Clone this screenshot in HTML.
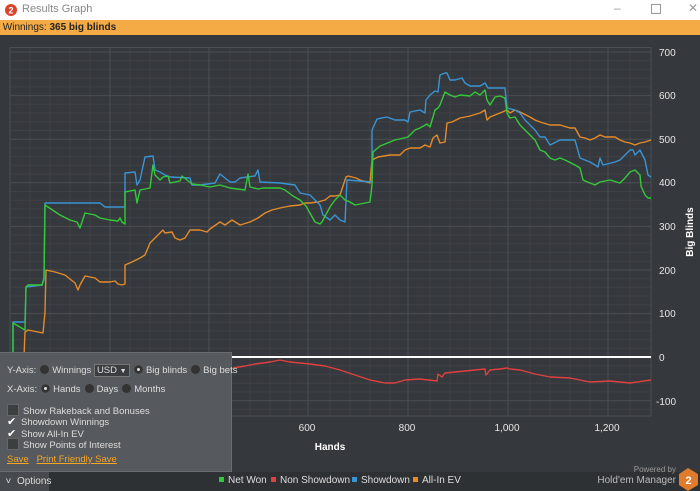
<!DOCTYPE html>
<html><head><meta charset="utf-8"><style>
body{margin:0;width:700px;height:491px;overflow:hidden;background:#35383c;font-family:"Liberation Sans",sans-serif;position:relative}
.title{position:absolute;left:0;top:0;width:700px;height:20px;background:#fff}
.bar{position:absolute;left:0;top:20px;width:700px;height:15px;background:#f4ab45;font-size:10px;line-height:15px;color:#222}
.panel{position:absolute;left:0;top:352px;width:231px;height:118px;background:#56595d;border:1px solid #6a6d70;border-left:none;color:#ddd;font-size:9.5px}
.panel div{position:absolute;white-space:nowrap}
.rad{display:inline-block;width:9px;height:9px;border-radius:50%;background:#333;vertical-align:-1px;margin:0 3px 0 4px}
.rad.on{background:#333;box-shadow:inset 0 0 0 3px #333,inset 0 0 0 5px #ddd}
.cb{display:inline-block;width:10px;height:10px;background:#3c3f42;border:1px solid #666;vertical-align:-2px;margin-right:4px}
.ck{display:inline-block;width:12px;color:#fff;font-size:11px;margin-right:2px}
.lnk{color:#f5a623;text-decoration:underline}
.bot{position:absolute;left:0;top:472px;width:700px;height:19px;background:#2e3134}
</style></head><body>
<div class="title">
 <svg style="position:absolute;left:5px;top:4px" width="12" height="12"><circle cx="6" cy="6" r="6" fill="#d9432b"/><text x="6" y="9.5" font-size="9" font-weight="bold" fill="#fff" text-anchor="middle" font-family="Liberation Sans">2</text></svg>
 <span style="position:absolute;left:22px;top:3px;font-size:11px;color:#888">Results Graph</span>
 <span style="position:absolute;left:614px;top:1px;font-size:12px;color:#999">–</span>
 <span style="position:absolute;left:651px;top:4px;width:8px;height:8px;border:1px solid #999"></span>
 <span style="position:absolute;left:688px;top:1px;font-size:12px;color:#999">✕</span>
</div>
<div class="bar">&nbsp;Winnings: <b>365 big blinds</b></div>
<svg style="position:absolute;left:0;top:35px" width="700" height="437" viewBox="0 35 700 437">
<g stroke="#3e4145" stroke-width="1">
<path d="M30 47V416M50 47V416M70 47V416M90 47V416M130 47V416M150 47V416M170 47V416M190 47V416M230 47V416M250 47V416M270 47V416M290 47V416M330 47V416M350 47V416M370 47V416M390 47V416M430 47V416M450 47V416M470 47V416M490 47V416M530 47V416M550 47V416M570 47V416M590 47V416M630 47V416"/>
<path d="M10 60.7H651M10 69.4H651M10 78.2H651M10 86.9H651M10 104.3H651M10 113H651M10 121.7H651M10 130.5H651M10 147.9H651M10 156.6H651M10 165.3H651M10 174H651M10 191.5H651M10 200.2H651M10 208.9H651M10 217.6H651M10 235H651M10 243.8H651M10 252.5H651M10 261.2H651M10 278.6H651M10 287.3H651M10 296H651M10 304.8H651M10 322.2H651M10 330.9H651M10 339.6H651M10 348.3H651M10 365.7H651M10 374.4H651M10 383.2H651M10 391.9H651M10 409.3H651"/>
</g>
<g stroke="#4b4e52" stroke-width="1">
<path d="M10 47V416M110 47V416M209 47V416M308 47V416M408 47V416M508 47V416M608 47V416M651 47V416"/>
<path d="M10 47.5H651M10 52H651M10 95.6H651M10 139.2H651M10 182.8H651M10 226.4H651M10 270H651M10 313.6H651M10 400.8H651M10 416H651"/>
</g>
<path d="M10 357H651" stroke="#fff" stroke-width="2"/>
<g fill="none" stroke-width="1.4" stroke-linejoin="round">
<polyline stroke="#e0413f" points="233,368 245,366 255,364 270,362 280,360 290,362 300,363 310,364 325,366 340,370 355,375 370,380 385,383 395,383 405,380 420,379 437,381 438,374 442,377 445,373 455,372 465,371 485,369 486,375 490,370 500,369 507,368 510,369 520,370 535,374 550,377 570,378 590,382 610,381 630,383 651,380"/>
<polyline stroke="#e48b2a" points="24,357 25,332 28,330 43,333 45,312 46,270 55,272 65,275 75,283 78,290 80,285 85,276 95,278 100,282 110,282 115,281 118,284 122,285 125,284 125,265 132,262 140,258 145,255 150,243 155,238 160,233 163,230 165,233 172,232 175,238 180,240 185,238 190,230 200,230 207,232 210,229 220,222 225,225 232,220 240,225 250,222 258,218 265,213 272,210 280,208 290,206 300,205 305,203 310,203 318,202 325,200 330,196 335,196 340,195 346,177 348,176 356,178 360,180 370,183 372,160 378,157 390,155 400,155 405,150 410,148 420,148 425,145 430,147 433,138 437,135 440,143 445,142 447,123 452,122 460,118 470,116 480,113 485,110 487,120 490,117 500,113 507,110 510,113 515,110 520,112 530,117 535,120 540,122 550,125 560,125 570,128 575,128 580,137 585,138 590,140 595,138 600,135 605,137 615,137 620,140 625,142 630,143 635,145 640,143 645,142 651,140"/>
<polyline stroke="#3a94d4" points="13,357 13,322 25,322 26,287 42,285 44,280 45,203 100,203 105,207 125,207 125,173 135,172 137,185 140,180 145,157 153,156 155,170 160,172 165,175 170,177 190,178 192,185 200,185 215,183 220,174 230,182 235,182 240,178 255,176 258,170 260,182 280,183 295,185 300,193 310,195 315,200 320,205 323,215 330,220 335,215 340,220 345,222 347,180 372,182 372,130 377,119 387,117 395,120 405,120 408,122 410,112 420,110 425,113 426,100 430,95 435,91 438,92 440,75 445,73 447,73 450,80 455,80 462,78 465,83 470,86 480,86 485,83 488,88 493,88 505,88 507,108 515,110 520,113 525,120 530,125 535,130 540,137 545,137 550,145 560,140 575,140 580,158 585,160 590,162 595,165 598,167 600,158 603,165 615,162 620,160 625,155 630,150 633,150 635,155 640,150 645,160 648,175 651,177"/>
<polyline stroke="#34c93a" points="13,357 13,323 25,330 26,287 28,285 42,285 44,278 45,205 48,207 60,215 70,220 77,222 80,228 85,213 95,215 100,218 110,220 118,221 120,218 122,222 125,224 125,192 135,190 137,203 140,190 150,188 153,165 155,175 160,180 163,177 168,176 170,183 180,181 182,176 192,184 200,185 210,187 220,185 230,188 245,190 248,174 250,187 258,189 263,188 280,188 285,190 293,196 300,200 306,206 315,222 320,224 322,222 330,207 335,200 340,195 345,200 350,202 355,205 370,202 372,185 373,152 380,146 395,140 408,137 415,130 420,128 427,124 430,127 435,110 438,108 440,105 445,92 450,95 455,97 460,95 470,96 475,92 480,95 485,90 487,100 490,105 495,97 500,96 505,98 507,113 510,118 515,117 520,125 525,130 535,140 540,150 545,152 550,158 555,160 560,158 565,160 575,165 580,168 583,180 590,183 595,185 600,182 610,180 620,183 625,178 630,172 635,170 640,175 641,186 645,195 648,198 651,198"/>
</g>
<g fill="#e6e6e6" font-size="10" font-family="Liberation Sans">
<text x="659" y="56">700</text><text x="659" y="99">600</text><text x="659" y="143">500</text><text x="659" y="186">400</text><text x="659" y="230">300</text><text x="659" y="274">200</text><text x="659" y="317">100</text><text x="659" y="361">0</text><text x="656" y="405">-100</text>
<text x="307" y="431" text-anchor="middle">600</text><text x="407" y="431" text-anchor="middle">800</text><text x="507" y="431" text-anchor="middle">1,000</text><text x="607" y="431" text-anchor="middle">1,200</text>
<text x="330" y="450" text-anchor="middle" font-weight="bold" fill="#fff">Hands</text>
<text transform="translate(693,232) rotate(-90)" text-anchor="middle" font-weight="bold" fill="#fff">Big Blinds</text>
</g>
</svg>
<div class="bot"></div>
<svg style="position:absolute;left:0;top:455px" width="700" height="36">
<polygon points="688,13 698,19 698,30 688,36 679,30 679,19" fill="#e07b2c"/>
<text x="688.5" y="29" text-anchor="middle" font-size="11" font-weight="bold" fill="#fff" font-family="Liberation Sans">2</text>
<g font-size="10" font-family="Liberation Sans">
<text x="676" y="17" text-anchor="end" font-size="8" fill="#999">Powered by</text>
<text x="676" y="28" text-anchor="end" fill="#bbb">Hold'em Manager</text>
<rect x="219" y="22" width="5" height="5" fill="#34c93a"/><text x="228" y="28" fill="#ddd">Net Won</text>
<rect x="271" y="22" width="5" height="5" fill="#e0413f"/><text x="280" y="28" fill="#ddd">Non Showdown</text>
<rect x="352" y="22" width="5" height="5" fill="#3a94d4"/><text x="361" y="28" fill="#ddd">Showdown</text>
<rect x="413" y="22" width="5" height="5" fill="#e48b2a"/><text x="422" y="28" fill="#ddd">All-In EV</text>
</g>
</svg>
<div style="position:absolute;left:0;top:472px;width:49px;height:19px;background:#46494d;color:#ddd;font-size:10px;line-height:19px">&nbsp;&nbsp;˅&nbsp;&nbsp;Options</div>
<div class="panel">
<div style="left:7px;top:11px">Y-Axis:<span class="rad"></span>Winnings <span style="display:inline-block;background:#3a3d40;border:1px solid #777;padding:0 2px;width:30px">USD <span style="font-size:7px">▼</span></span><span class="rad on"></span>Big blinds<span class="rad"></span>Big bets</div>
<div style="left:7px;top:31px">X-Axis:<span class="rad on"></span>Hands<span class="rad"></span>Days<span class="rad"></span>Months</div>
<div style="left:7px;top:51px"><span class="cb"></span>Show Rakeback and Bonuses</div>
<div style="left:7px;top:62px"><span class="ck">✔</span>Showdown Winnings</div>
<div style="left:7px;top:74px"><span class="ck">✔</span>Show All-In EV</div>
<div style="left:7px;top:85px"><span class="cb"></span>Show Points of Interest</div>
<div style="left:7px;top:101px"><span class="lnk">Save</span>&nbsp;&nbsp;&nbsp;<span class="lnk">Print Friendly Save</span></div>
</div>
</body></html>
